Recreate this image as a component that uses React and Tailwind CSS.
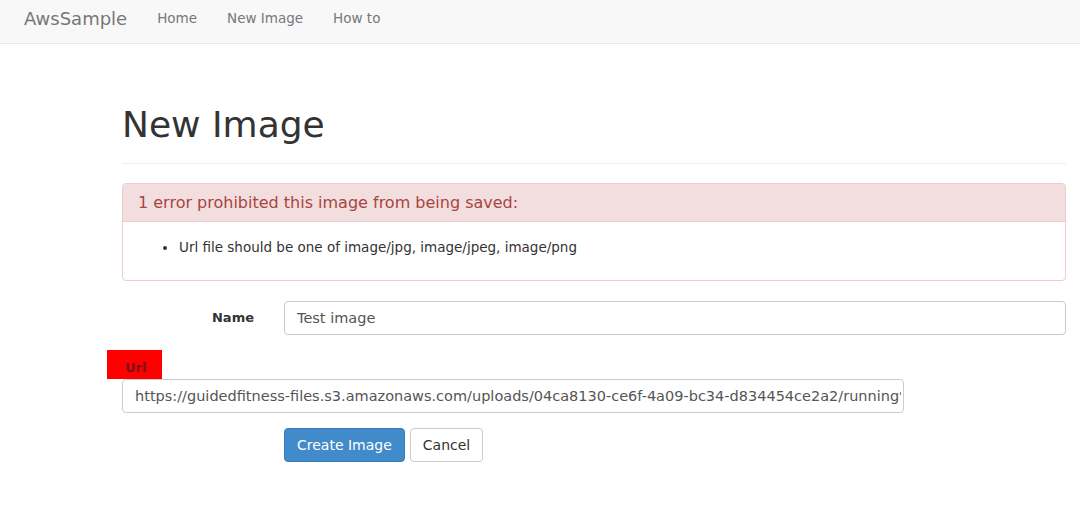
export default function App() {
  return (
    <div className="min-h-screen bg-white text-[#333] font-['DejaVu_Sans',sans-serif]">
      <nav className="h-[44px] bg-[#f8f8f8] border-b border-[#e7e7e7] flex items-center pb-[6px]">
        <span className="ml-[24px] text-[18px] text-[#777]">AwsSample</span>
        <ul className="flex ml-[30px] text-[13.5px] text-[#777]">
          <li>Home</li>
          <li className="ml-[30px]">New Image</li>
          <li className="ml-[30px]">How to</li>
        </ul>
      </nav>

      <div className="pl-[122px] pr-[14px]">
        <h1 className="mt-[57px] text-[36px] leading-[48px] font-normal">New Image</h1>
        <div className="mt-[14px] border-t border-[#eee]" />

        <div className="mt-[19px] border border-[#ebccd1] rounded-[4px] overflow-hidden">
          <div className="h-[38px] bg-[#f2dede] border-b border-[#ebccd1] flex items-center px-[15px] pt-[1px] text-[16px] text-[#a94442]">
            1 error prohibited this image from being saved:
          </div>
          <ul className="pl-[55px] pt-[16px] pb-[24px] list-disc text-[13.5px] leading-[18px]">
            <li className="pl-[1px]">Url file should be one of image/jpg, image/jpeg, image/png</li>
          </ul>
        </div>

        <div className="mt-[20px] flex items-center">
          <label className="w-[132px] text-right text-[13px] font-bold">Name</label>
          <input
            className="ml-[30px] flex-1 h-[34px] px-[12px] border border-[#ccc] rounded-[4px] text-[14.5px] text-[#555] outline-none"
            defaultValue="Test image"
          />
        </div>

        <div className="mt-[15px] -ml-[15px] w-[55px] h-[29px] bg-[#ff0000] flex items-end pl-[18px] pb-[2px]">
          <span className="text-[13px] font-bold text-[#7a1515]">Url</span>
        </div>
        <input
          className="block w-[782px] h-[34px] pl-[12px] pr-[2px] border border-[#ccc] rounded-[4px] text-[14.5px] text-[#555] outline-none"
          defaultValue="https://guidedfitness-files.s3.amazonaws.com/uploads/04ca8130-ce6f-4a09-bc34-d834454ce2a2/running%20shoes.gif"
        />

        <div className="mt-[15px] ml-[162px] flex">
          <button className="h-[34px] px-[12px] bg-[#428bca] border border-[#357ebd] rounded-[4px] text-white text-[14px]">
            Create Image
          </button>
          <button className="ml-[5px] h-[34px] px-[12px] bg-white border border-[#ccc] rounded-[4px] text-[#333] text-[14px]">
            Cancel
          </button>
        </div>
      </div>
    </div>
  );
}
